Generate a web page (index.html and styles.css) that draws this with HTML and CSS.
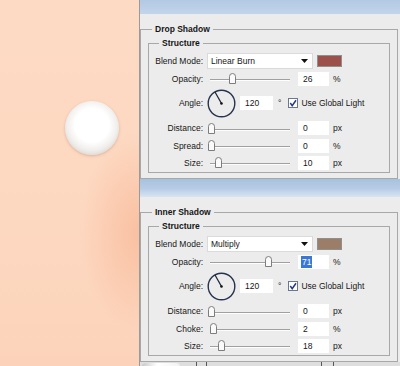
FILE: index.html
```html
<!DOCTYPE html>
<html>
<head>
<meta charset="utf-8">
<link rel="stylesheet" href="styles.css">
</head>
<body>
<div class="page">
  <div class="canvas"><div class="ball"></div></div>
  <div class="dialogs">
    <section class="panel">
      <div class="titlebar t1"></div>
      <div class="body">
        <fieldset class="outer"><legend>Drop Shadow</legend>
          <fieldset class="inner"><legend>Structure</legend>
            <div class="row row-blend"><span class="lbl">Blend Mode:</span><div class="select"><span>Linear Burn</span><svg class="arrow" width="7" height="4" viewBox="0 0 7 4"><polygon points="0,0 7,0 3.5,4" fill="#111"/></svg></div><span class="swatch red"></span></div>
            <div class="row row-opacity"><span class="lbl">Opacity:</span><div class="slider"><svg class="thumb" style="left:21.5px" width="7" height="11" viewBox="0 0 7 11"><path d="M0.5 3.5 Q0.5 0.5 3.5 0.5 Q6.5 0.5 6.5 3.5 V10.5 H0.5 Z" fill="#fafafa" stroke="#7d7d7d"/></svg></div><span class="num">26</span><span class="unit">%</span></div>
            <div class="row row-angle"><span class="lbl">Angle:</span><svg class="dial" width="29" height="29" viewBox="0 0 29 29"><circle cx="14.5" cy="14.5" r="13.3" fill="none" stroke="#27344f" stroke-width="1.4"/><line x1="14.5" y1="14.5" x2="8" y2="3" stroke="#1d2638" stroke-width="1.3"/><circle cx="14.5" cy="14.5" r="1.3" fill="#111"/></svg><span class="num angle">120</span><span class="deg">°</span><svg class="check" width="10" height="10" viewBox="0 0 10 10"><rect x="0.5" y="0.5" width="9" height="9" fill="#fff" stroke="#6a7790"/><polyline points="2.3,5 4.2,7.6 8,2.2" fill="none" stroke="#253788" stroke-width="1.5"/></svg><span class="cbl">Use Global Light</span></div>
            <div class="row row-distance"><span class="lbl">Distance:</span><div class="slider"><svg class="thumb" style="left:0.5px" width="7" height="11" viewBox="0 0 7 11"><path d="M0.5 3.5 Q0.5 0.5 3.5 0.5 Q6.5 0.5 6.5 3.5 V10.5 H0.5 Z" fill="#fafafa" stroke="#7d7d7d"/></svg></div><span class="num">0</span><span class="unit">px</span></div>
            <div class="row row-slider"><span class="lbl">Spread:</span><div class="slider"><svg class="thumb" style="left:0.5px" width="7" height="11" viewBox="0 0 7 11"><path d="M0.5 3.5 Q0.5 0.5 3.5 0.5 Q6.5 0.5 6.5 3.5 V10.5 H0.5 Z" fill="#fafafa" stroke="#7d7d7d"/></svg></div><span class="num">0</span><span class="unit">%</span></div>
            <div class="row row-slider"><span class="lbl">Size:</span><div class="slider"><svg class="thumb" style="left:7.5px" width="7" height="11" viewBox="0 0 7 11"><path d="M0.5 3.5 Q0.5 0.5 3.5 0.5 Q6.5 0.5 6.5 3.5 V10.5 H0.5 Z" fill="#fafafa" stroke="#7d7d7d"/></svg></div><span class="num">10</span><span class="unit">px</span></div>
          </fieldset>
        </fieldset>
      </div>
    </section>
    <section class="panel">
      <div class="titlebar t2"></div>
      <div class="body">
        <fieldset class="outer"><legend>Inner Shadow</legend>
          <fieldset class="inner"><legend>Structure</legend>
            <div class="row row-blend"><span class="lbl">Blend Mode:</span><div class="select"><span>Multiply</span><svg class="arrow" width="7" height="4" viewBox="0 0 7 4"><polygon points="0,0 7,0 3.5,4" fill="#111"/></svg></div><span class="swatch tan"></span></div>
            <div class="row row-opacity"><span class="lbl">Opacity:</span><div class="slider"><svg class="thumb" style="left:57.5px" width="7" height="11" viewBox="0 0 7 11"><path d="M0.5 3.5 Q0.5 0.5 3.5 0.5 Q6.5 0.5 6.5 3.5 V10.5 H0.5 Z" fill="#fafafa" stroke="#7d7d7d"/></svg></div><span class="num"><span class="sel">71</span></span><span class="unit">%</span></div>
            <div class="row row-angle"><span class="lbl">Angle:</span><svg class="dial" width="29" height="29" viewBox="0 0 29 29"><circle cx="14.5" cy="14.5" r="13.3" fill="none" stroke="#27344f" stroke-width="1.4"/><line x1="14.5" y1="14.5" x2="8" y2="3" stroke="#1d2638" stroke-width="1.3"/><circle cx="14.5" cy="14.5" r="1.3" fill="#111"/></svg><span class="num angle">120</span><span class="deg">°</span><svg class="check" width="10" height="10" viewBox="0 0 10 10"><rect x="0.5" y="0.5" width="9" height="9" fill="#fff" stroke="#6a7790"/><polyline points="2.3,5 4.2,7.6 8,2.2" fill="none" stroke="#253788" stroke-width="1.5"/></svg><span class="cbl">Use Global Light</span></div>
            <div class="row row-distance"><span class="lbl">Distance:</span><div class="slider"><svg class="thumb" style="left:0.5px" width="7" height="11" viewBox="0 0 7 11"><path d="M0.5 3.5 Q0.5 0.5 3.5 0.5 Q6.5 0.5 6.5 3.5 V10.5 H0.5 Z" fill="#fafafa" stroke="#7d7d7d"/></svg></div><span class="num">0</span><span class="unit">px</span></div>
            <div class="row row-slider"><span class="lbl">Choke:</span><div class="slider"><svg class="thumb" style="left:2.5px" width="7" height="11" viewBox="0 0 7 11"><path d="M0.5 3.5 Q0.5 0.5 3.5 0.5 Q6.5 0.5 6.5 3.5 V10.5 H0.5 Z" fill="#fafafa" stroke="#7d7d7d"/></svg></div><span class="num">2</span><span class="unit">%</span></div>
            <div class="row row-slider"><span class="lbl">Size:</span><div class="slider"><svg class="thumb" style="left:10.5px" width="7" height="11" viewBox="0 0 7 11"><path d="M0.5 3.5 Q0.5 0.5 3.5 0.5 Q6.5 0.5 6.5 3.5 V10.5 H0.5 Z" fill="#fafafa" stroke="#7d7d7d"/></svg></div><span class="num">18</span><span class="unit">px</span></div>
          </fieldset>
        </fieldset>
      </div>
    </section>
    <div class="strip"><span class="blob"></span><span class="tick t-a"></span><span class="tick t-b"></span><span class="tick t-c"></span><span class="tick t-d"></span></div>
  </div>
</div>
</body>
</html>
```

FILE: styles.css
```css
html, body {
  margin: 0;
  padding: 0;
}
body {
  font-family: "Liberation Sans", Arial, sans-serif;
  font-size: 8.5px;
  color: #161616;
  background: #ececec;
}
.page {
  display: flex;
  width: 400px;
  height: 366px;
  overflow: hidden;
}
.canvas {
  width: 139px;
  flex: none;
  background:
    radial-gradient(ellipse 60px 100px at 140px 232px, rgba(247, 176, 140, 0.6), rgba(247, 176, 140, 0) 100%),
    linear-gradient(#fddac4, #fdd8c1 60%, #fcd3ba);
  overflow: hidden;
}
.ball {
  width: 54px;
  height: 54px;
  border-radius: 50%;
  margin: 101px 0 0 65px;
  background: radial-gradient(circle at 50% 45%, #ffffff 0, #ffffff 42%, #f1efed 62%, #d6d0cb 82%, #bdb4ad 100%);
  box-shadow: 0 1px 3px rgba(170, 120, 95, 0.4);
}
.dialogs {
  width: 260px;
  flex: none;
  display: flex;
  flex-direction: column;
  border-left: 1px solid #9a9a9a;
  background: #ececec;
}
.titlebar.t1 {
  height: 14px;
  background: linear-gradient(#b2c9e4, #c2d5ea);
}
.titlebar.t2 {
  height: 18px;
  background: linear-gradient(#a7c1de, #b7cde6 55%, #d8e4f1);
}
.body {
  padding: 9px 2px 0 0;
}
fieldset {
  margin: 0;
  padding: 0;
  border: 1px solid #a8a8a8;
  min-width: 0;
}
legend {
  font-weight: bold;
  padding: 0 3px;
  line-height: 12px;
}
.outer > legend {
  margin-left: 11px;
}
.inner {
  margin: 2px 7px 5px;
  padding: 3px 0 1px;
}
.inner > legend {
  margin-left: 10px;
}
.row {
  display: flex;
  align-items: center;
  white-space: nowrap;
}
.row-blend { height: 18px; }
.row-opacity { height: 17px; }
.row-angle { height: 32px; }
.row-distance { height: 18px; }
.row-slider { height: 17px; }
.lbl {
  width: 54px;
  text-align: right;
  margin-right: 4px;
  flex: none;
}
.select {
  width: 106px;
  height: 16px;
  box-sizing: border-box;
  background: #fff;
  border: 1px solid #dadada;
  display: flex;
  align-items: center;
  justify-content: space-between;
  padding: 0 4px 0 3px;
  flex: none;
}
.swatch {
  width: 25px;
  height: 12px;
  margin-left: 4px;
  box-sizing: border-box;
  border: 1px solid #8f8f8f;
  flex: none;
}
.swatch.red { background: #9b514a; }
.swatch.tan { background: #9c7d67; }
.slider {
  position: relative;
  width: 86px;
  height: 11px;
  flex: none;
}
.slider::before {
  content: "";
  position: absolute;
  left: 3px;
  right: 3px;
  top: 6px;
  height: 1px;
  background: #a0a0a0;
  box-shadow: 0 1px 0 #fdfdfd;
}
.thumb {
  position: absolute;
  top: 0;
}
.num {
  margin-left: 5px;
  width: 31px;
  height: 14px;
  box-sizing: border-box;
  background: #fff;
  padding-left: 5px;
  line-height: 14px;
  flex: none;
}
.num.angle {
  margin-left: 4px;
  width: 33px;
}
.sel {
  background: #3a78d6;
  color: #fff;
  padding: 0 1px;
  margin-left: -2px;
  display: inline-block;
  line-height: 12px;
}
.unit {
  margin-left: 4px;
}
.dial {
  flex: none;
}
.deg {
  margin-left: 5px;
}
.check {
  margin-left: 7px;
  flex: none;
}
.cbl {
  margin-left: 3px;
}
.strip {
  flex: 1;
  position: relative;
  background: #dedede;
}
.blob {
  position: absolute;
  left: 2px;
  top: 1px;
  width: 38px;
  height: 8px;
  border-radius: 4px 4px 0 0;
  background: linear-gradient(90deg, #c8c8c8, #ffffff 40%, #f2f2f2);
}
.tick {
  position: absolute;
  top: 0;
  width: 1px;
  height: 8px;
  background: #555;
}
.t-a { left: 56px; }
.t-b { left: 66px; }
.t-c { left: 181px; }
.t-d { left: 193px; }
```
